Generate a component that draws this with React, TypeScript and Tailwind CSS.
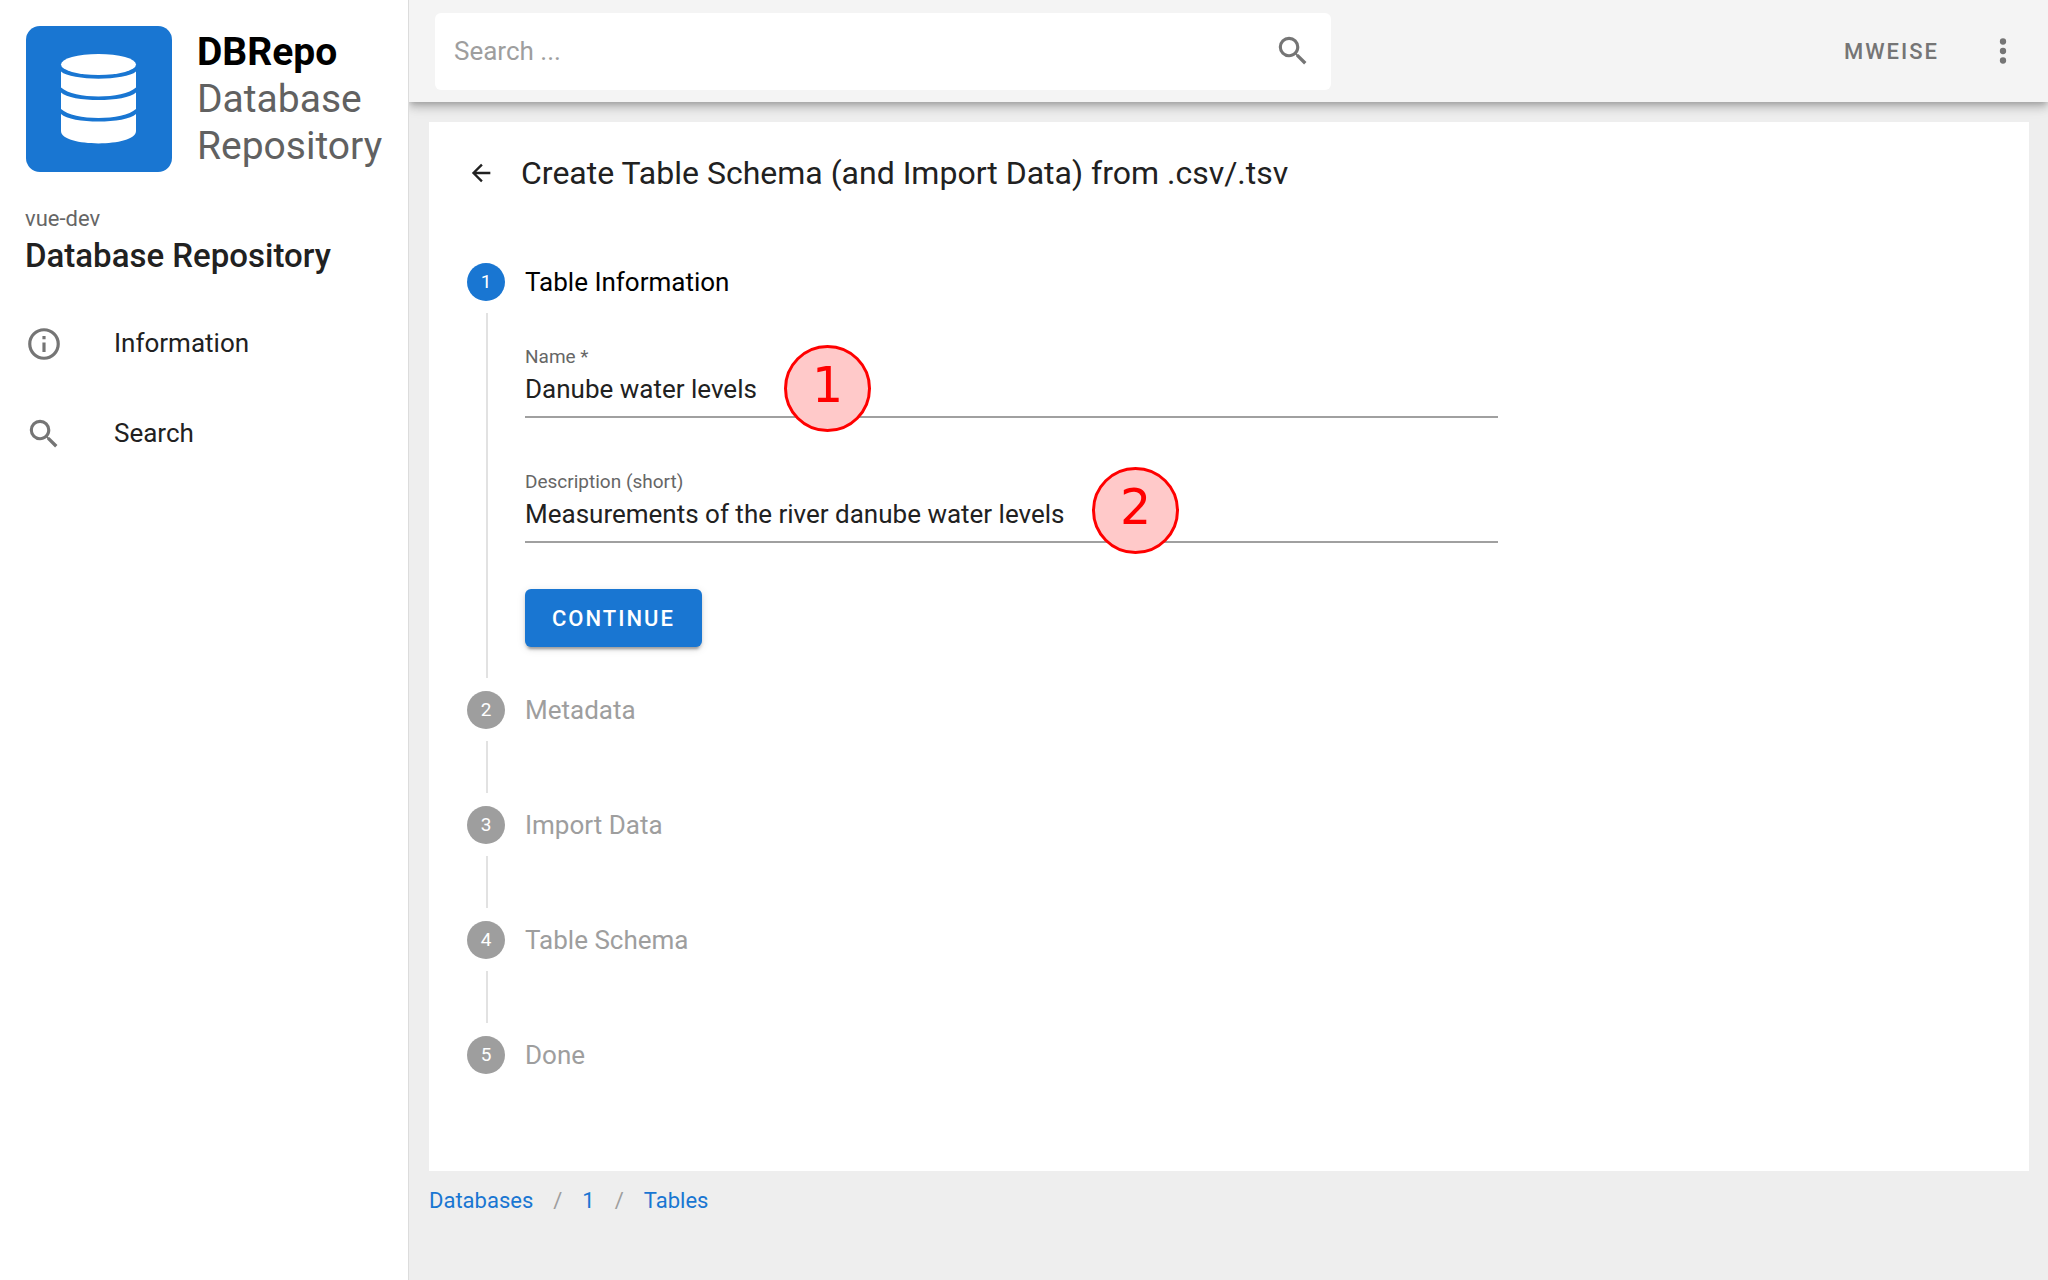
import { useState } from 'react';
import type { ReactNode } from 'react';

const ICONS = {
  magnify:
    'M9.5,3A6.5,6.5 0 0,1 16,9.5C16,11.11 15.41,12.59 14.44,13.73L14.71,14H15.5L20.5,19L19,20.5L14,15.5V14.71L13.73,14.44C12.59,15.41 11.11,16 9.5,16A6.5,6.5 0 0,1 3,9.5A6.5,6.5 0 0,1 9.5,3M9.5,5C7,5 5,7 5,9.5C5,12 7,14 9.5,14C12,14 14,12 14,9.5C14,7 12,5 9.5,5Z',
  info: 'M11,9H13V7H11M12,20C7.59,20 4,16.41 4,12C4,7.59 7.59,4 12,4C16.41,4 20,7.59 20,12C20,16.41 16.41,20 12,20M12,2A10,10 0 0,0 2,12A10,10 0 0,0 12,22A10,10 0 0,0 22,12A10,10 0 0,0 12,2M11,17H13V11H11V17Z',
  arrowLeft: 'M20,11V13H8L13.5,18.5L12.08,19.92L4.16,12L12.08,4.08L13.5,5.5L8,11H20Z',
  dots: 'M12,16A2,2 0 0,1 14,18A2,2 0 0,1 12,20A2,2 0 0,1 10,18A2,2 0 0,1 12,16M12,10A2,2 0 0,1 14,12A2,2 0 0,1 12,14A2,2 0 0,1 10,12A2,2 0 0,1 12,10M12,4A2,2 0 0,1 14,6A2,2 0 0,1 12,8A2,2 0 0,1 10,6A2,2 0 0,1 12,4Z',
};

function Icon({ name, className }: { name: keyof typeof ICONS; className: string }) {
  return (
    <svg viewBox="0 0 24 24" fill="currentColor" className={className} aria-hidden="true">
      <path d={ICONS[name]} />
    </svg>
  );
}

function Logo() {
  return (
    <div className="flex items-center gap-[25px]">
      <svg viewBox="0 0 147 147" className="size-[147px] shrink-0" aria-hidden="true">
        <rect x="1" y="0" width="146" height="146" rx="14" fill="#1976d2" />
        <g fill="#fff">
          <ellipse cx="73.500" cy="38.500" rx="37.500" ry="10.500" />
          <path d="M36 45.500C46 55 101 55 111 45.500V61.500C98 73.500 49 73.500 36 61.500Z" />
          <path d="M36 66.500C46 76.500 101 76.500 111 66.500V83C98 95 49 95 36 83Z" />
          <path d="M36 88C46 98 101 98 111 88V105C111 121.500 36 121.500 36 105Z" />
        </g>
      </svg>
      <div className="text-[39px] leading-[47px] text-[#616161]">
        <div className="font-bold text-black">DBRepo</div>
        <div>Database</div>
        <div>Repository</div>
      </div>
    </div>
  );
}

function NavItem({ icon, label }: { icon: keyof typeof ICONS; label: string }) {
  return (
    <a href="#" className="flex h-[77px] items-center gap-[51px]">
      <Icon name={icon} className="size-[38px] text-[#757575]" />
      <span className="text-[26px]">{label}</span>
    </a>
  );
}

function Sidebar() {
  return (
    <aside className="w-[409px] shrink-0 border-r border-[#dcdcdc] bg-white px-[25px] pt-[26px]">
      <Logo />
      <div className="mt-[30px] text-[22px] leading-8 text-[#666]">vue-dev</div>
      <div className="text-[33px] leading-[42px] font-medium">Database Repository</div>
      <nav className="mt-[28px] flex flex-col gap-[13px]">
        <NavItem icon="info" label="Information" />
        <NavItem icon="magnify" label="Search" />
      </nav>
    </aside>
  );
}

function TopBar() {
  return (
    <header className="z-10 flex h-[102px] items-center bg-[#f4f4f4] px-[26px] shadow-[0_3px_6px_-2px_rgba(0,0,0,0.2),0_6px_8px_0_rgba(0,0,0,0.14),0_2px_16px_0_rgba(0,0,0,0.12)]">
      <div className="flex h-[77px] w-full max-w-[896px] items-center rounded-md bg-white px-[19px]">
        <input
          type="text"
          aria-label="Search"
          placeholder="Search ..."
          className="min-w-0 flex-1 text-[26px] outline-none placeholder:text-[#9e9e9e]"
        />
        <button type="button" aria-label="Search" className="text-[#757575]">
          <Icon name="magnify" className="size-[38px]" />
        </button>
      </div>
      <div className="ml-auto flex items-center gap-[45px] text-[#757575]">
        <button type="button" className="text-[22px] font-medium tracking-[2px]">
          MWEISE
        </button>
        <button type="button" aria-label="Menu">
          <Icon name="dots" className="size-[38px]" />
        </button>
      </div>
    </header>
  );
}

function Marker({ children, className }: { children: ReactNode; className: string }) {
  return (
    <div
      className={`absolute flex size-[87px] justify-center rounded-full border-[3px] border-[#f00] bg-[#ffc9c9] font-['DejaVu_Sans',sans-serif] text-[49px] leading-[76px] text-[#f00] ${className}`}
    >
      {children}
    </div>
  );
}

interface FieldProps {
  id: string;
  label: string;
  initial: string;
  marker: ReactNode;
}

function Field({ id, label, initial, marker }: FieldProps) {
  const [value, setValue] = useState(initial);

  return (
    <div className="relative">
      <label htmlFor={id} className="block text-[19px] leading-6 text-[#666]">
        {label}
      </label>
      <div className="border-b-2 border-[#a0a0a0] pb-[7px]">
        <input
          id={id}
          type="text"
          value={value}
          onChange={(e) => setValue(e.target.value)}
          className="block h-10 w-full text-[26px] outline-none"
        />
      </div>
      {marker}
    </div>
  );
}

interface StepProps {
  number: number;
  title: string;
  active?: boolean;
  last?: boolean;
  children?: ReactNode;
}

function Step({ number, title, active, last, children }: StepProps) {
  return (
    <li>
      <div className="flex h-[38px] items-center gap-5">
        <span
          className={`flex size-[38px] items-center justify-center rounded-full text-[19px] text-white ${active ? 'bg-[#1976d2]' : 'bg-[#9e9e9e]'}`}
        >
          {number}
        </span>
        <span className={`text-[26px] ${active ? 'text-black' : 'text-[#9e9e9e]'}`}>{title}</span>
      </div>
      {!last && (
        <div className="mt-3 mb-[13px] ml-[19px] min-h-[52px] border-l-2 border-[#e2e2e2] pl-[37px]">{children}</div>
      )}
    </li>
  );
}

function CreateTableCard() {
  return (
    <section className="bg-white px-[38px] pb-[97px]">
      <div className="flex h-[102px] items-center gap-[26px]">
        <button type="button" aria-label="Back">
          <Icon name="arrowLeft" className="size-7" />
        </button>
        <h1 className="text-[32px]">Create Table Schema (and Import Data) from .csv/.tsv</h1>
      </div>
      <ol className="pt-[39px]">
        <Step number={1} title="Table Information" active>
          <form className="flex max-w-[973px] flex-col pt-8 pb-[31px]" onSubmit={(e) => e.preventDefault()}>
            <Field
              id="name"
              label="Name *"
              initial="Danube water levels"
              marker={<Marker className="top-0 left-[259px]">1</Marker>}
            />
            <div className="mt-[52px]">
              <Field
                id="description"
                label="Description (short)"
                initial="Measurements of the river danube water levels"
                marker={<Marker className="-top-[3px] left-[567px]">2</Marker>}
              />
            </div>
            <button
              type="submit"
              className="mt-[46px] h-[58px] self-start rounded-md bg-[#1976d2] px-[27px] text-[22px] font-medium tracking-[2px] text-white shadow-[0_5px_2px_-3px_rgba(0,0,0,0.2),0_3px_3px_0_rgba(0,0,0,0.14),0_2px_8px_0_rgba(0,0,0,0.12)]"
            >
              CONTINUE
            </button>
          </form>
        </Step>
        <Step number={2} title="Metadata" />
        <Step number={3} title="Import Data" />
        <Step number={4} title="Table Schema" />
        <Step number={5} title="Done" last />
      </ol>
    </section>
  );
}

function Breadcrumbs() {
  return (
    <nav aria-label="Breadcrumb" className="flex gap-[20px] pt-[13px] text-[22px] leading-[33px] text-[#1976d2]">
      <a href="#">Databases</a>
      <span className="text-[#9e9e9e]">/</span>
      <a href="#">1</a>
      <span className="text-[#9e9e9e]">/</span>
      <a href="#">Tables</a>
    </nav>
  );
}

export default function App() {
  return (
    <div className="flex min-h-screen bg-[#eee] font-[Roboto,sans-serif] text-[#212121]">
      <Sidebar />
      <div className="flex min-w-0 flex-1 flex-col overflow-hidden">
        <TopBar />
        <main className="pt-5 pr-[19px] pl-5">
          <CreateTableCard />
          <Breadcrumbs />
        </main>
      </div>
    </div>
  );
}
